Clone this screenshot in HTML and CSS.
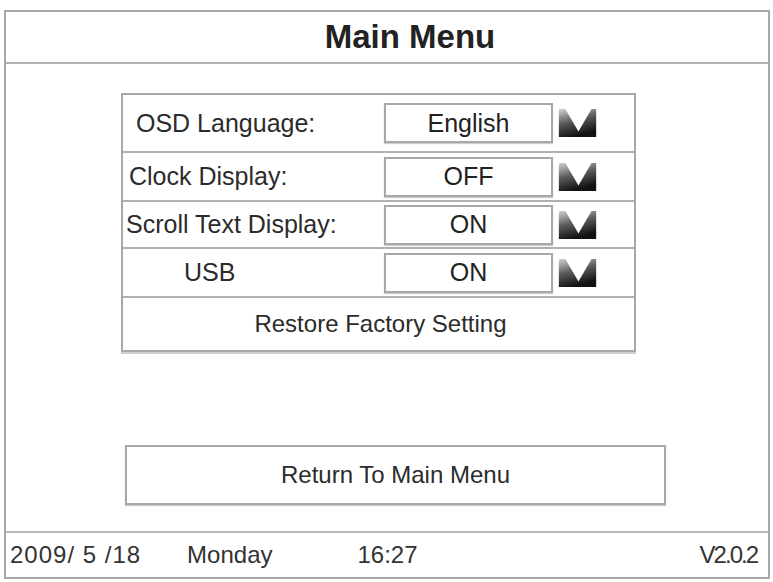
FILE: index.html
```html
<!DOCTYPE html>
<html>
  <head>
    <title>Main Menu</title>
    <link rel="stylesheet" href="styles.css">
  </head>
  <body>
    <div class="screen">
      <div class="title-bar">Main Menu</div>

      <div class="content">
        <div class="settings">
          <div class="row row-osd">
            <span class="label label-osd">OSD Language:</span>
            <span class="value">English</span>
            <svg class="drop" viewBox="0 0 40 30"><use href="#arrow" /></svg>
          </div>
          <div class="row row-clock">
            <span class="label label-clock">Clock Display:</span>
            <span class="value">OFF</span>
            <svg class="drop" viewBox="0 0 40 30"><use href="#arrow" /></svg>
          </div>
          <div class="row row-scroll">
            <span class="label label-scroll">Scroll Text Display:</span>
            <span class="value">ON</span>
            <svg class="drop" viewBox="0 0 40 30"><use href="#arrow" /></svg>
          </div>
          <div class="row row-usb">
            <span class="label label-usb">USB</span>
            <span class="value">ON</span>
            <svg class="drop" viewBox="0 0 40 30"><use href="#arrow" /></svg>
          </div>
          <div class="row row-restore">Restore Factory Setting</div>
        </div>

        <div class="return-btn">Return To Main Menu</div>
      </div>

      <div class="status-bar">
        <span class="date">2009/ 5 /18</span>
        <span class="day">Monday</span>
        <span class="time">16:27</span>
        <span class="version">V2.0.2</span>
      </div>
    </div>

    <!-- shared drop-down arrow -->
    <svg width="0" height="0" style="position:absolute">
      <defs>
        <linearGradient id="arrowShade" x1="0" y1="0" x2="0.35" y2="1">
          <stop offset="0" stop-color="#d4d4d4" />
          <stop offset="0.5" stop-color="#5a5a5a" />
          <stop offset="1" stop-color="#111" />
        </linearGradient>
        <g id="arrow">
          <rect x="0" y="0" width="40" height="30" fill="url(#arrowShade)" />
          <polygon points="7,0 35,0 21,24" fill="#fff" />
        </g>
      </defs>
    </svg>
  </body>
</html>
```

FILE: styles.css
```css
body {
  margin: 0;
  background: #fff;
  font-family: "Liberation Sans", Arial, sans-serif;
  color: #2b2b2b;
}

.screen {
  margin: 10px 0 0 4px;
  width: 766px;
  height: 569px;
  box-sizing: border-box;
  border: 2px solid #a8a8a8;
  display: flex;
  flex-direction: column;
}

.title-bar {
  height: 50px;
  border-bottom: 2px solid #b0b0b0;
  display: flex;
  align-items: center;
  justify-content: center;
  font-size: 33px;
  font-weight: bold;
  color: #222;
  padding-left: 46px;
}

.content {
  flex: 1;
  padding: 29px 0 0 115px;
}

.settings {
  width: 515px;
  box-sizing: border-box;
  border: 2px solid #a8a8a8;
  box-shadow: 0 2px 0 #d0d0d0;
}

.row {
  display: flex;
  align-items: center;
  box-sizing: border-box;
  height: 49px;
  border-bottom: 2px solid #b0b0b0;
  font-size: 25px;
}

.row-osd {
  height: 58px;
}

.row-scroll {
  height: 47px;
}

.row-restore {
  height: 52px;
  border-bottom: none;
  justify-content: center;
  padding-left: 4px;
  font-size: 24px;
}

.label {
  width: 261px;
  box-sizing: border-box;
}

.label-osd {
  padding-left: 13px;
}

.label-clock {
  padding-left: 6px;
}

.label-scroll {
  padding-left: 3px;
}

.label-usb {
  padding-left: 61px;
}

.value {
  width: 169px;
  height: 40px;
  box-sizing: border-box;
  border: 2px solid #a8a8a8;
  box-shadow: 0 1px 1px #ccc;
  display: flex;
  align-items: center;
  justify-content: center;
  color: #222;
}

.drop {
  width: 39px;
  height: 28px;
  margin-left: 5px;
}

.return-btn {
  margin: 93px 0 0 4px;
  width: 541px;
  height: 60px;
  box-sizing: border-box;
  border: 2px solid #a8a8a8;
  box-shadow: 0 1px 1px #ccc;
  display: flex;
  align-items: center;
  justify-content: center;
  font-size: 24px;
}

.status-bar {
  height: 44px;
  border-top: 2px solid #b8b8b8;
  display: flex;
  align-items: center;
  padding: 0 11px 0 4px;
  font-size: 24px;
  color: #333;
}

.date {
  letter-spacing: 1px;
}

.day {
  margin-left: 46px;
}

.time {
  margin-left: 85px;
}

.version {
  margin-left: auto;
  letter-spacing: -2px;
}
```
